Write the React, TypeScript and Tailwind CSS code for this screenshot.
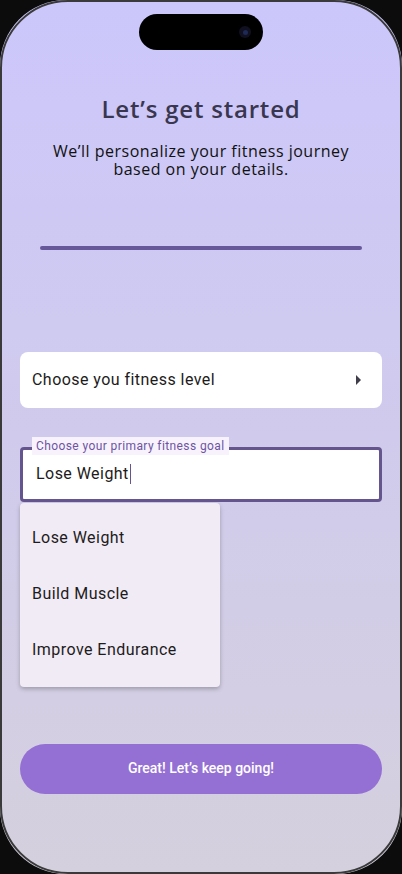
import React from "react";

export default function App() {
  return (
    <div className="w-[402px] h-[874px] bg-[#0c0c0c] overflow-hidden relative">
      <div className="absolute inset-0 rounded-[68px] border-[2px] border-[#3a3a3a] pointer-events-none" />
      <div
        className="w-[402px] h-[874px] rounded-[66px] overflow-hidden flex flex-col bg-gradient-to-b from-[#ccc7fb] via-[#d0cbec] to-[#d5d0dd]"
        style={{ fontFamily: "Roboto, 'Noto Sans', sans-serif" }}
      >
        {/* dynamic island */}
        <div className="flex justify-center pt-[14px]">
          <div className="w-[124px] h-[36px] rounded-full bg-black flex items-center justify-end pr-[12px]">
            <div className="w-[12px] h-[12px] rounded-full bg-[#101020] flex items-center justify-center">
              <div className="w-[5px] h-[5px] rounded-full bg-[#1e2a55]" />
            </div>
          </div>
        </div>

        <h1
          className="mt-[44px] text-center text-[24px] leading-[30px] font-semibold text-[#393650] tracking-[0.8px]"
          style={{ fontFamily: "'Open Sans', sans-serif" }}
        >
          Let’s get started
        </h1>
        <p
          className="mt-[18px] mx-auto w-[340px] text-center text-[16px] leading-[18px] text-[#111] tracking-[0.5px]"
          style={{ fontFamily: "'Open Sans', sans-serif" }}
        >
          We’ll personalize your fitness journey based on your details.
        </p>

        <div className="mt-[68px] mx-[40px] h-[3.5px] rounded-full bg-[#67589a]" />

        <div className="mt-[102px] mx-[20px] h-[56px] rounded-[8px] bg-white flex items-center justify-between pl-[12px] pr-[20px]">
          <span className="text-[16px] text-[#1d1b20] tracking-[0.45px]">Choose you fitness level</span>
          <svg width="6" height="10" viewBox="0 0 6 10">
            <path d="M0 0 L5 5 L0 10 Z" fill="#3f3d4a" />
          </svg>
        </div>

        <div className="mt-[39px] mx-[20px] relative">
          <div className="h-[55px] rounded-[4px] border-[3px] border-[#65558f] bg-white flex items-center pl-[13px]">
            <span className="text-[16px] text-[#1d1b20] tracking-[0.45px]">Lose Weight</span>
            <span className="ml-[1px] w-[1.5px] h-[20px] bg-[#65558f]" />
          </div>
          <div className="absolute left-[12px] top-[-10px] px-[4px] h-[18px] flex items-center bg-[#f8f2fd] text-[12px] text-[#6d55a3] tracking-[0.4px]">
            Choose your primary fitness goal
          </div>
        </div>

        <div className="ml-[20px] mt-[1px] w-[200px] h-[184px] rounded-[4px] bg-[#f1ebf6] shadow-[0_2px_4px_rgba(0,0,0,0.25)] flex flex-col py-[7px]">
          {["Lose Weight", "Build Muscle", "Improve Endurance"].map((t) => (
            <div key={t} className="h-[56px] flex items-center pl-[12px] text-[16px] text-[#1d1b20] tracking-[0.45px]">
              {t}
            </div>
          ))}
        </div>

        <div className="mt-[57px] mx-[20px] h-[50px] rounded-full bg-[#9570d4] flex items-center justify-center">
          <span className="text-[14px] font-medium text-white">Great! Let’s keep going!</span>
        </div>
      </div>
    </div>
  );
}
